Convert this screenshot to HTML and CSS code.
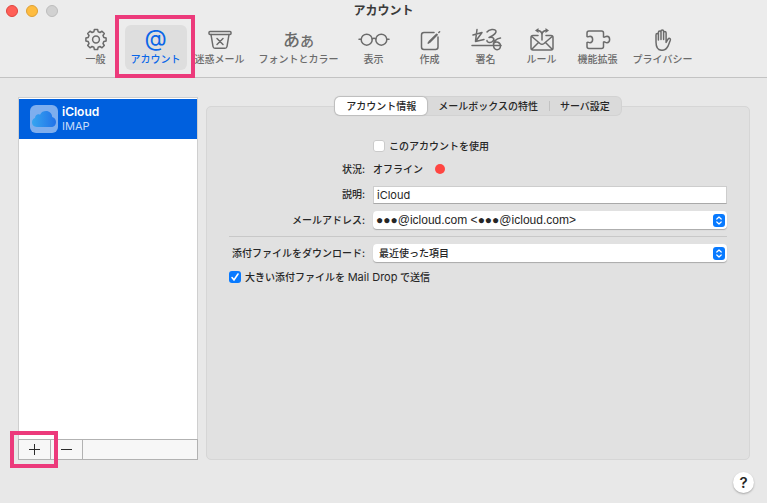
FILE: index.html
```html
<!DOCTYPE html>
<html lang="ja">
<head>
    <meta charset="UTF-8">
    <meta name="viewport" content="width=device-width, initial-scale=1.0">
    <link rel="stylesheet" href="styles.css">
    <title>アカウント</title>
</head>
<body>
    <header class="header">
        <div class="titlebar">
            <div class="lights">
                <span class="light red"></span>
                <span class="light yellow"></span>
                <span class="light gray"></span>
            </div>
            <h1 class="title">アカウント</h1>
        </div>
        <nav class="toolbar">
            <button class="tool">
                <svg class="icon" width="24" height="24" viewBox="-12 -12.5 24 24">
                    <path d="M-2.1-7.8L-1.6-10.1H1.6L2.1-7.8L4-7L6-8.3L8.3-6L7-4L7.8-2.1L10.1-1.6V1.6L7.8 2.1L7 4L8.3 6L6 8.3L4 7L2.1 7.8L1.6 10.1H-1.6L-2.1 7.8L-4 7L-6 8.3L-8.3 6L-7 4L-7.8 2.1L-10.1 1.6V-1.6L-7.8-2.1L-7-4L-8.3-6L-6-8.3L-4-7Z"/>
                    <circle r="3.4"/>
                </svg>
                <span>一般</span>
            </button>
            <button class="tool active marked">
                <span class="icon glyph_at">@</span>
                <span>アカウント</span>
            </button>
            <button class="tool">
                <svg class="icon" width="24" height="24" viewBox="0 0 24 24">
                    <rect x="1" y="4.5" width="22" height="3" rx="1"/>
                    <path d="M3 7.5L5 19.5Q5.3 21.3 7 21.3H17Q18.7 21.3 19 19.5L21 7.5M9 11.5L15 17.5M15 11.5L9 17.5"/>
                </svg>
                <span>迷惑メール</span>
            </button>
            <button class="tool">
                <span class="icon glyph_font">あ<small>あ</small></span>
                <span>フォントとカラー</span>
            </button>
            <button class="tool">
                <svg class="icon" width="32" height="24" viewBox="0 0 32 24">
                    <circle cx="8.7" cy="12.7" r="5.5"/>
                    <circle cx="23.3" cy="12.7" r="5.5"/>
                    <path d="M14 11.8Q16 10.8 18 11.8M3.2 12.3H1M28.8 12.3H31"/>
                </svg>
                <span>表示</span>
            </button>
            <button class="tool">
                <svg class="icon" width="24" height="24" viewBox="0 0 24 24">
                    <path d="M16 5.5H6Q3.5 5.5 3.5 8V20Q3.5 22.5 6 22.5H17.5Q20 22.5 20 20V10M20.8 5.5L21.6 4.7"/>
                    <path d="M10.2 16.2L11.2 14.6L18.6 7.2L19.2 7.8L11.8 15.2Z"/>
                </svg>
                <span>作成</span>
            </button>
            <button class="tool">
                <svg class="icon" width="32" height="24" viewBox="0 0 32 24">
                    <path d="M7 2.5L5.5 14M3 8L12 5.5L5.5 14.5L14 12.5M17 5C19 2 25 1.5 26 4C26.5 7 22 9 19 10.5C23 9.5 25 11.5 23 14C21 16.500 16.500 15.500 17 13.500M30.500 11C26 11.500 23 15 23.500 18.500C24 24 30 24 30.500 19C30.500 15 26 14 24 16"/>
                    <path d="M2 18.5H31"/>
                </svg>
                <span>署名</span>
            </button>
            <button class="tool">
                <svg class="icon" width="26" height="24" viewBox="0 0 26 24">
                    <path d="M9 8.5H4Q2 8.5 2 10.5V21Q2 23 4 23H22Q24 23 24 21V10.5Q24 8.5 22 8.5H17M2.8 9.5L11 16.5Q13 18 15 16.5L23.2 9.5M2.8 22.2L9.5 15.5M23.2 22.2L16.5 15.5M13 13V8Q13 4 9 3.5M13 8Q13 4 17 3.5"/>
                    <path class="solid" d="M6 3.5L9.5 1V6ZM20 3.5L16.5 1V6Z"/>
                </svg>
                <span>ルール</span>
            </button>
            <button class="tool">
                <svg class="icon" width="26" height="24" viewBox="0 0 26 24">
                    <path d="M2 9.5V6Q2 4 4 4H16.5Q18.5 4 18.5 6V10C19.5 11 20 9.3 22 9.3C25.5 9.5 25.5 15.5 22 15.7C20 15.7 19.5 14 18.5 15V19.5Q18.5 21.5 16.5 21.5H4Q2 21.5 2 19.5V15.5C3 14.5 3.5 15.7 5 15.7C8.5 15.5 8.5 9.5 5 9.3C3.5 9.3 3 10.5 2 9.5Z"/>
                </svg>
                <span>機能拡張</span>
            </button>
            <button class="tool">
                <svg class="icon" width="24" height="24" viewBox="0 0 24 24">
                    <path d="M5 15V8Q5 6.5 6.2 6.5T7.4 8V13M7.4 12.5V5.5Q7.4 4 8.7 4T10 5.5V12.5M10 12V4.5Q10 3 11.3 3T12.6 4.5V12M12.6 12.5V5.8Q12.6 4.4 13.8 4.4T15.1 5.8V15.5L17 12.2Q18 10.8 19 11.5Q19.7 12 19.2 13.5L17 19.2Q15 23.3 11 23.3Q5 23.3 5 15"/>
                </svg>
                <span>プライバシー</span>
            </button>
        </nav>
    </header>
    <main class="main">
        <aside class="sidebar">
            <ul class="accounts">
                <li class="account">
                    <svg class="cloud" width="28" height="28" viewBox="0 0 28 28">
                        <defs>
                            <linearGradient id="sky" x1="0" x2="1">
                                <stop offset="0" stop-color="#36a5f0"/>
                                <stop offset="1" stop-color="#2272e8"/>
                            </linearGradient>
                        </defs>
                        <rect width="28" height="28" rx="6" fill="#7eaeee"/>
                        <path fill="url(#sky)" d="M7 22C3.5 22 2 19.5 2 17.3C2 15 3.3 13.5 5 13C5 10 8 8.5 10 9.8C11.3 7 13.5 6 16 6C19.5 6 22 8.5 22.2 12C24.5 12.5 26 14.5 26 17C26 20 24 22 21 22Z"/>
                    </svg>
                    <div class="account_text">
                        <strong>iCloud</strong>
                        <span>IMAP</span>
                    </div>
                </li>
            </ul>
            <div class="list_bar">
                <button class="bar_btn marked" aria-label="追加">
                    <svg width="11" height="11" viewBox="0 0 11 11"><path d="M0 5.5H11M5.5 0V11"/></svg>
                </button>
                <button class="bar_btn" aria-label="削除">
                    <svg width="11" height="11" viewBox="0 0 11 11"><path d="M0 5.5H11"/></svg>
                </button>
            </div>
        </aside>
        <section class="panel">
            <div class="tabs" role="tablist">
                <button class="tab selected" role="tab" aria-selected="true">アカウント情報</button>
                <button class="tab" role="tab">メールボックスの特性</button>
                <button class="tab" role="tab">サーバ設定</button>
            </div>
            <form class="form">
                <label class="check second_col"><input type="checkbox" class="box">このアカウントを使用</label>

                <span class="label">状況:</span>
                <span class="status">オフライン<i class="dot"></i></span>

                <label class="label" for="desc">説明:</label>
                <input type="text" id="desc" class="field" value="iCloud">

                <label class="label" for="mail">メールアドレス:</label>
                <div class="popup">
                    <select id="mail" class="select mail">
                        <option>●●●@icloud.com &lt;●●●@icloud.com&gt;</option>
                    </select>
                    <svg class="arrows" width="12" height="13" viewBox="0 0 12 13"><rect width="12" height="13" rx="3"/><path d="M3.8 5L6 3L8.2 5M3.8 8L6 10L8.2 8"/></svg>
                </div>

                <hr class="line">

                <label class="label" for="download">添付ファイルをダウンロード:</label>
                <div class="popup">
                    <select id="download" class="select">
                        <option>最近使った項目</option>
                    </select>
                    <svg class="arrows" width="12" height="13" viewBox="0 0 12 13"><rect width="12" height="13" rx="3"/><path d="M3.8 5L6 3L8.2 5M3.8 8L6 10L8.2 8"/></svg>
                </div>

                <label class="check full"><input type="checkbox" class="box" checked><span>大きい添付ファイルを <span class="latin">Mail Drop</span> で送信</span></label>
            </form>
        </section>
    </main>
    <footer class="footer">
        <button class="help" aria-label="ヘルプ">?</button>
    </footer>
</body>
</html>
```
FILE: styles.css
```css
*{
    margin: 0;
    padding: 0;
    box-sizing: border-box;
}
body{
    display: flex;
    flex-direction: column;
    min-height: 100vh;
    background-color: #e8e8e8;
    color: #262626;
    font-family: Inter, "Noto Sans CJK JP", sans-serif;
    font-size: 10px;
    font-weight: 500;
    line-height: 16px;
}
button, input, select{
    font: inherit;
    color: inherit;
    border: 0;
    outline: 0;
}
.header{
    background-color: #ececec;
    border-bottom: 1px solid #c3c3c3;
    padding-bottom: 7px;
}
.titlebar{
    display: grid;
    grid-template-columns: 1fr auto 1fr;
    align-items: center;
    height: 22px;
    padding: 0 6px;
}
.lights{
    display: flex;
    gap: 8px;
}
.light{
    width: 12px;
    height: 12px;
    border-radius: 50%;
    border: 1px solid #e0443e;
    background-color: #ff5f57;
}
.yellow{
    border-color: #dea034;
    background-color: #febc40;
}
.gray{
    border-color: #bdbdbd;
    background-color: #d1d1d1;
}
.title{
    font-size: 12px;
    font-weight: 700;
    color: #3a3a3a;
}
.toolbar{
    display: flex;
    justify-content: center;
    gap: 2px;
    padding-top: 3px;
}
.tool{
    display: flex;
    flex-direction: column;
    align-items: center;
    position: relative;
    min-width: 54px;
    height: 45px;
    padding: 2px 6px 0;
    border-radius: 6px;
    background: none;
    color: #6b6b6b;
    white-space: nowrap;
}
.icon{
    height: 24px;
    fill: none;
    stroke: currentColor;
    stroke-width: 1.5;
    stroke-linecap: round;
    stroke-linejoin: round;
}
.solid{
    fill: currentColor;
    stroke: none;
}
.active{
    background-color: #dedede;
    color: #0a66e8;
}
.glyph_at{
    font-size: 23px;
    font-weight: 400;
    line-height: 22px;
}
.glyph_font{
    font-size: 17px;
    line-height: 26px;
}
.glyph_font small{
    font-size: 14px;
}
/* pink callout frame */
.marked::after{
    content: "";
    position: absolute;
    inset: -10px -8px -8px -10px;
    border: 4px solid #ec3a7b;
    z-index: 1;
    pointer-events: none;
}
.main{
    flex: 1;
    display: flex;
    gap: 8px;
    padding: 19px 17px 0 18px;
}
.sidebar{
    display: flex;
    flex-direction: column;
    width: 180px;
}
.accounts{
    flex: 1;
    padding-top: 1px;
    list-style: none;
    background-color: #fff;
    border: 1px solid #cfcfcf;
    border-bottom: 0;
}
.account{
    display: flex;
    align-items: center;
    gap: 4px;
    height: 40px;
    padding-left: 11px;
    background-color: #0060de;
    color: #fff;
}
.account_text{
    display: flex;
    flex-direction: column;
    line-height: 15px;
}
.account_text strong{
    font-size: 12px;
    font-weight: 600;
}
.account_text span{
    font-size: 11px;
    font-weight: 400;
    color: #c8dcf8;
}
.list_bar{
    display: flex;
    height: 21px;
    border: 1px solid #b2b2b2;
    background-color: #f7f7f7;
}
.bar_btn{
    position: relative;
    display: flex;
    align-items: center;
    justify-content: center;
    width: 32px;
    border-right: 1px solid #b2b2b2;
    background: none;
    stroke: #2b2b2b;
}
.bar_btn::after{
    inset: -9px -8px -9px -9px;
}
.panel{
    flex: 1;
    margin-top: 9px;
    padding: 0 22px;
    background-color: #e1e1e1;
    border: 1px solid #d6d6d6;
    border-radius: 5px;
}
.tabs{
    display: flex;
    width: max-content;
    height: 18px;
    margin: -10px auto 23px;
    border-radius: 5px;
    background-color: #dadada;
    box-shadow: 0 0 0 1px #d2d2d2;
}
.tab{
    padding: 0 11px;
    background: none;
    white-space: nowrap;
}
.tab:last-child{
    background: linear-gradient(#c2c2c2, #c2c2c2) left center / 1px 10px no-repeat;
}
.selected{
    border-radius: 5px;
    background-color: #fff;
    box-shadow: 0 0 1px 1px #bdbdbd;
}
.form{
    display: grid;
    grid-template-columns: 136px 1fr;
    gap: 7px 8px;
    align-items: center;
}
.label{
    text-align: right;
    white-space: nowrap;
}
.second_col{
    grid-column: 2;
}
.full, .line{
    grid-column: 1 / 3;
}
.check{
    display: flex;
    align-items: center;
    gap: 4px;
}
.latin{
    font-size: 11px;
    font-weight: 400;
    line-height: 1;
}
.box{
    appearance: none;
    width: 12px;
    height: 12px;
    border-radius: 3px;
    background-color: #fff;
    box-shadow: inset 0 0 0 1px #cbcbcb;
}
.box:checked{
    background: #087aff url('data:image/svg+xml,<svg xmlns="http://www.w3.org/2000/svg" viewBox="0 0 12 12"><path d="M3 6.5L5 9L9 3" fill="none" stroke="white" stroke-width="1.6" stroke-linecap="round"/></svg>');
    box-shadow: none;
}
.status{
    display: flex;
    align-items: center;
    gap: 12px;
    height: 16px;
}
.dot{
    width: 10px;
    height: 10px;
    border-radius: 50%;
    background-color: #ff4642;
}
.field{
    width: 100%;
    height: 18px;
    margin-top: 2px;
    padding: 0 3px;
    font-size: 11px;
    font-weight: 400;
    background-color: #fff;
    border: 1px solid #cdcdcd;
    border-bottom-color: #a9a9a9;
}
.popup{
    position: relative;
    display: flex;
}
.select{
    appearance: none;
    width: 100%;
    height: 18px;
    padding: 0 20px 0 6px;
    border-radius: 4px;
    background-color: #fff;
    box-shadow: 0 1px 1px #a9a9a9;
}
.mail{
    padding-left: 3px;
    font-family: "Liberation Sans", "Noto Sans CJK JP", sans-serif;
    font-size: 12px;
    font-weight: 400;
}
.arrows{
    position: absolute;
    top: 3px;
    right: 2px;
    fill: #087aff;
    pointer-events: none;
}
.arrows path{
    fill: none;
    stroke: #fff;
    stroke-width: 1.2;
    stroke-linecap: round;
    stroke-linejoin: round;
}
.line{
    border: 0;
    height: 1px;
    background-color: #c8c8c8;
}
.footer{
    display: flex;
    justify-content: flex-end;
    padding: 12px 13px 10px;
}
.help{
    width: 21px;
    height: 21px;
    border-radius: 50%;
    background-color: #fff;
    box-shadow: 0 1px 2px #a5a5a5;
    font-size: 15px;
    font-weight: 600;
    line-height: 21px;
}
```
